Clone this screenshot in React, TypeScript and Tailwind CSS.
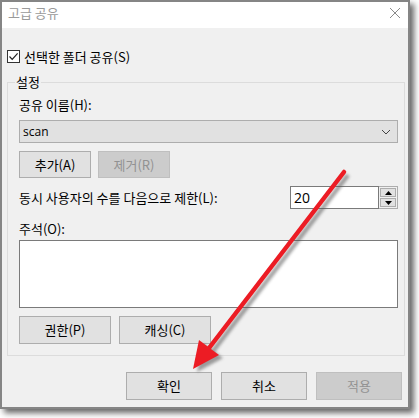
import React from "react";

function Btn({ label, disabled, w }: { label: string; disabled?: boolean; w: string }) {
  return (
    <div
      className={
        "flex items-center justify-center border leading-[16px] " +
        w +
        (disabled
          ? " bg-[#cccccc] border-[#bfbfbf] text-[#929292]"
          : " bg-[#e1e1e1] border-[#adadad] text-black")
      }
    >
      {label}
    </div>
  );
}

export default function App() {
  return (
    <div className="relative w-[419px] h-[418px] bg-white overflow-hidden font-['Noto_Sans_CJK_KR','Noto_Sans',sans-serif] text-[13px] text-black">
      <div className="w-[410px] h-[409px] border-2 border-[#858585] bg-[#f0f0f0] shadow-[4px_4px_6px_rgba(0,0,0,0.6)] flex flex-col">
        {/* Title bar */}
        <div className="h-[26px] bg-white flex items-start justify-between pl-[6px] pr-[7px] pt-[3px] shrink-0">
          <span className="leading-[16px] text-[#9a9a9a]">고급 공유</span>
          <svg width="12" height="12" viewBox="0 0 12 12" className="mt-[2px]">
            <path d="M1 1 L11 11 M11 1 L1 11" stroke="#8a8a8a" strokeWidth="1" />
          </svg>
        </div>

        {/* Body */}
        <div className="flex-1 flex flex-col pl-[5px]">
          {/* checkbox */}
          <div className="mt-[22px] h-[13px] flex items-center gap-[4px]">
            <div className="w-[13px] h-[13px] border border-[#333333] bg-white flex items-center justify-center">
              <svg width="11" height="11" viewBox="0 0 11 11">
                <path d="M1.5 5.5 L4.2 8.3 L9.6 2.3" stroke="#222" strokeWidth="1.2" fill="none" />
              </svg>
            </div>
            <span className="leading-[16px]">선택한 폴더 공유(S)</span>
          </div>

          {/* group box */}
          <div className="relative mt-[19px] w-[398px] border border-[#dcdcdc] pt-[14px] pl-[11px] pr-[6px] pb-[11px] flex flex-col">
            <span className="absolute left-[7px] top-[-9px] px-[1px] bg-[#f0f0f0] leading-[16px]">설정</span>
            <div className="leading-[16px]">공유 이름(H):</div>
            <div className="mt-[7px] h-[23px] bg-[#e1e1e1] border border-[#adadad] flex items-center justify-between pl-[3px] pr-[6px]">
              <span className="font-['Open_Sans','Noto_Sans',sans-serif] text-[12px] leading-[16px]">scan</span>
              <svg width="10" height="6" viewBox="0 0 10 6">
                <path d="M1 1 L5 5 L9 1" stroke="#444" strokeWidth="1" fill="none" />
              </svg>
            </div>
            <div className="mt-[8px] flex gap-[7px]">
              <Btn label="추가(A)" w="w-[72px] h-[27px]" />
              <Btn label="제거(R)" w="w-[72px] h-[27px]" disabled />
            </div>
            <div className="mt-[8px] flex items-center justify-between">
              <span className="leading-[16px]">동시 사용자의 수를 다음으로 제한(L):</span>
              <div className="flex h-[23px] w-[108px]">
                <div className="flex-1 bg-white border border-[#7a7a7a] flex items-center pl-[3px]">
                  <span className="font-['Open_Sans','Noto_Sans',sans-serif] text-[14px] leading-[16px]">20</span>
                </div>
                <div className="w-[19px] border border-l-0 border-[#adadad] bg-[#f0f0f0] flex flex-col justify-center gap-[1px] px-[1px]">
                  <div className="h-[9px] bg-[#e1e1e1] border border-[#adadad] flex items-center justify-center">
                    <svg width="7" height="4" viewBox="0 0 7 4">
                      <path d="M0 4 L3.5 0 L7 4 Z" fill="#000" />
                    </svg>
                  </div>
                  <div className="h-[9px] bg-[#e1e1e1] border border-[#adadad] flex items-center justify-center">
                    <svg width="7" height="4" viewBox="0 0 7 4">
                      <path d="M0 0 L3.5 4 L7 0 Z" fill="#000" />
                    </svg>
                  </div>
                </div>
              </div>
            </div>
            <div className="mt-[12px] leading-[16px]">주석(O):</div>
            <div className="mt-[3px] h-[68px] bg-white border border-[#7a7a7a]" />
            <div className="mt-[8px] flex gap-[8px]">
              <Btn label="권한(P)" w="w-[92px] h-[28px]" />
              <Btn label="캐싱(C)" w="w-[92px] h-[28px]" />
            </div>
          </div>

          {/* bottom buttons */}
          <div className="mt-[16px] flex justify-end gap-[9px] pr-[6px]">
            <Btn label="확인" w="w-[86px] h-[28px]" />
            <Btn label="취소" w="w-[86px] h-[28px]" />
            <Btn label="적용" w="w-[86px] h-[28px]" disabled />
          </div>
        </div>
      </div>

      {/* red arrow annotation */}
      <svg className="absolute left-0 top-0 pointer-events-none" width="419" height="418">
        <defs>
          <filter id="blur" x="-20%" y="-20%" width="140%" height="140%">
            <feGaussianBlur stdDeviation="1.4" />
          </filter>
        </defs>
        <g transform="translate(4,3)" opacity="0.55" filter="url(#blur)">
          <line x1="344" y1="172" x2="206" y2="352" stroke="#555" strokeWidth="4.5" />
          <polygon points="193,369 199,340 219,355" fill="#555" />
        </g>
        <line x1="344" y1="172" x2="206" y2="352" stroke="#ec1c24" strokeWidth="4.5" strokeLinecap="round" />
        <polygon points="193,369 199,340 219,355" fill="#ec1c24" />
      </svg>
    </div>
  );
}
